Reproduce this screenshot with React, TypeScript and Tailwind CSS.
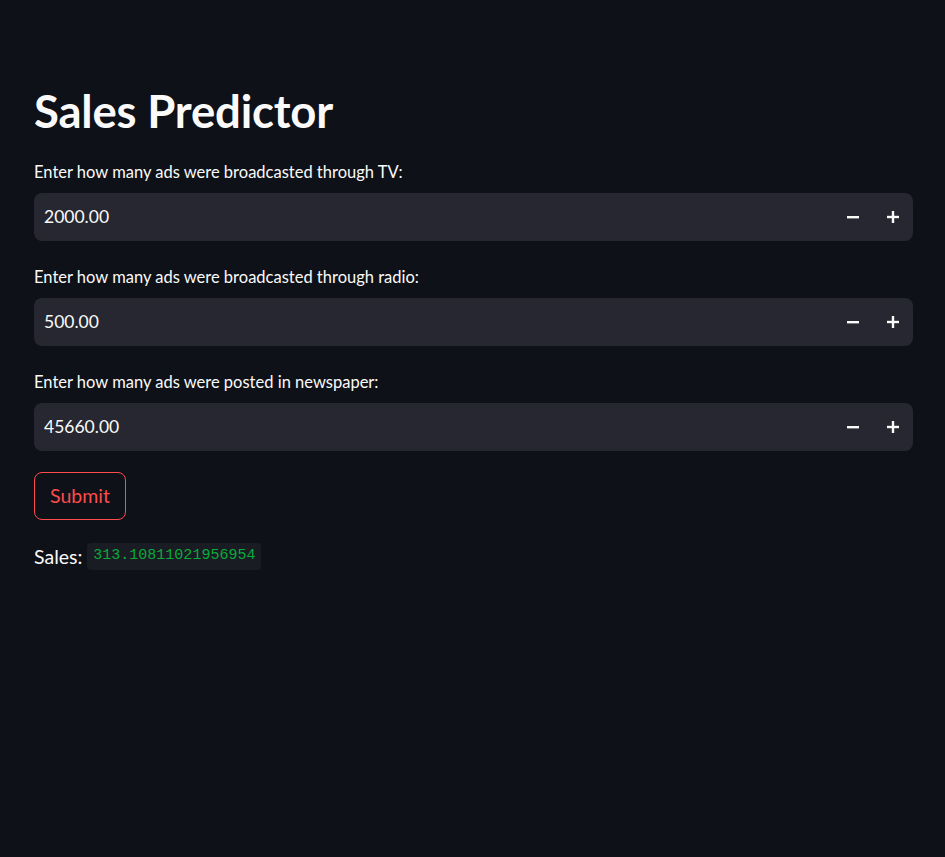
import { useState } from "react";

const fields = [
  { label: "Enter how many ads were broadcasted through TV:", value: 2000 },
  { label: "Enter how many ads were broadcasted through radio:", value: 500 },
  { label: "Enter how many ads were posted in newspaper:", value: 45660 },
];

function NumberInput({ label, initial }: { label: string; initial: number }) {
  const [value, setValue] = useState(initial);
  return (
    <div className="flex flex-col">
      <label className="mb-[10px] text-[16.5px] leading-[22px] text-[#fafafa]">{label}</label>
      <div className="flex h-[48px] items-center rounded-lg bg-[#262730] pl-[10px]">
        <input
          className="flex-1 bg-transparent text-[17.5px] text-[#fafafa] outline-none"
          value={value.toFixed(2)}
          onChange={(e) => setValue(Number(e.target.value) || 0)}
        />
        <button
          className="flex h-[40px] w-[40px] items-center justify-center text-[#fafafa]"
          onClick={() => setValue((v) => v - 1)}
          aria-label="decrement"
        >
          <svg width="12" height="12" viewBox="0 0 12 12">
            <rect x="0" y="5" width="12" height="2.4" fill="currentColor" />
          </svg>
        </button>
        <button
          className="flex h-[40px] w-[40px] items-center justify-center text-[#fafafa]"
          onClick={() => setValue((v) => v + 1)}
          aria-label="increment"
        >
          <svg width="12" height="12" viewBox="0 0 12 12">
            <rect x="0" y="4.8" width="12" height="2.4" fill="currentColor" />
            <rect x="4.8" y="0" width="2.4" height="12" fill="currentColor" />
          </svg>
        </button>
      </div>
    </div>
  );
}

export default function App() {
  return (
    <main
      className="min-h-[857px] w-full bg-[#0e1117] pl-[34px] pr-[32px] pt-[84px] text-[#fafafa]"
      style={{ fontFamily: "Lato, 'Noto Sans', sans-serif" }}
    >
      <h1 className="mb-[23px] text-[45.5px] font-bold leading-[54px] tracking-[-0.2px]">Sales Predictor</h1>
      <div className="flex flex-col gap-[25px]">
        {fields.map((f) => (
          <NumberInput key={f.label} label={f.label} initial={f.value} />
        ))}
      </div>
      <button className="mt-[21px] h-[48px] rounded-lg border border-[#ff4b4b] px-[15px] text-[19.5px] text-[#ff4b4b]">
        Submit
      </button>
      <div className="mt-[22px] flex items-center gap-[5px] text-[19.5px]">
        <span>Sales:</span>
        <code
          className="rounded-[4px] bg-[#1a1c24] px-[6px] py-[2px] text-[15px] text-[#09ab3b]"
          style={{ fontFamily: "'Liberation Mono', monospace" }}
        >
          313.10811021956954
        </code>
      </div>
    </main>
  );
}
